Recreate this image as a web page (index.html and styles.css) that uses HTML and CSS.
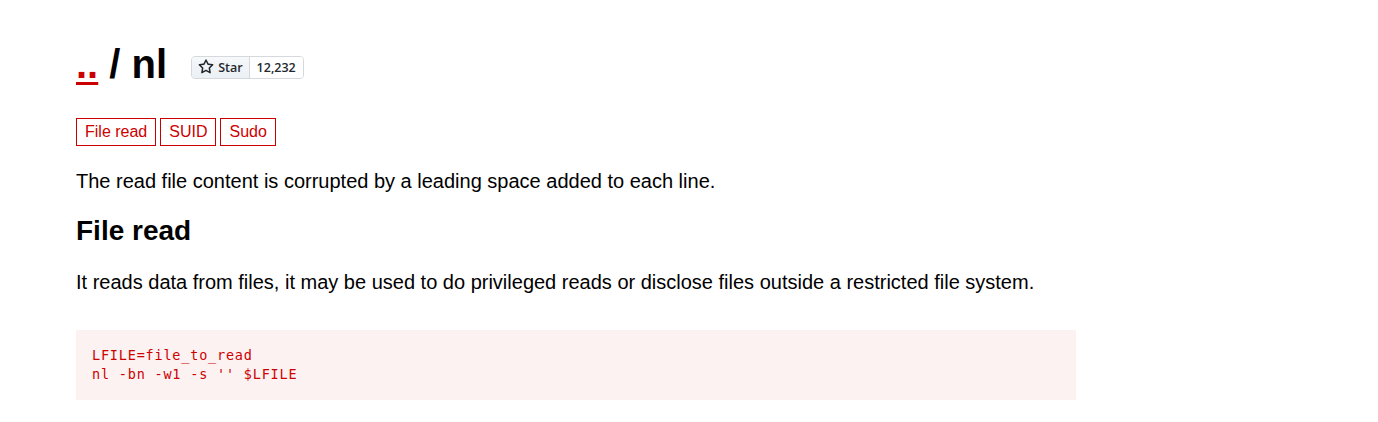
FILE: index.html
```html
<!DOCTYPE html>
<html>
<head>
<meta charset="utf-8">
<link rel="stylesheet" href="styles.css">
</head>
<body>
<main class="page">
  <div class="title-row">
    <h1 class="title"><a class="up" href="#">..</a> / nl</h1>
    <span class="gh-btn">
      <span class="gh-star">
        <svg class="gh-icon" viewBox="0 0 16 16" width="16" height="16"><path d="M8 .25a.75.75 0 0 1 .673.418l1.882 3.815 4.21.612a.75.75 0 0 1 .416 1.279l-3.046 2.97.719 4.192a.751.751 0 0 1-1.088.791L8 12.347l-3.766 1.980a.75.75 0 0 1-1.088-.79l.72-4.194L.818 6.374a.75.75 0 0 1 .416-1.28l4.21-.611L7.327.668A.75.75 0 0 1 8 .25Zm0 2.445L6.615 5.5a.75.75 0 0 1-.564.41l-3.097.45 2.240 2.184a.75.75 0 0 1 .216.664l-.528 3.084 2.769-1.456a.75.75 0 0 1 .698 0l2.770 1.456-.530-3.084a.75.75 0 0 1 .216-.664l2.240-2.183-3.096-.45a.75.75 0 0 1-.564-.41L8 2.694Z"/></svg>
        Star
      </span>
      <span class="gh-count">12,232</span>
    </span>
  </div>
  <ul class="tags">
    <li><a class="tag" href="#">File read</a></li>
    <li><a class="tag" href="#">SUID</a></li>
    <li><a class="tag" href="#">Sudo</a></li>
  </ul>
  <p class="text">The read file content is corrupted by a leading space added to each line.</p>
  <h2 class="section">File read</h2>
  <p class="text">It reads data from files, it may be used to do privileged reads or disclose files outside a restricted file system.</p>
  <pre class="code"><code>LFILE=file_to_read
nl -bn -w1 -s '' $LFILE</code></pre>
</main>
</body>
</html>
```

FILE: styles.css
```css
html, body {
  margin: 0;
  padding: 0;
  background: #fff;
}
body {
  font-family: "Liberation Sans", Arial, sans-serif;
  color: #000;
}
.page {
  width: 1000px;
  padding: 26px 0 0 76px;
}
.title-row {
  display: flex;
  align-items: center;
  gap: 24px;
  height: 70px;
}
.title {
  margin: 0;
  font-size: 40px;
  font-weight: bold;
  line-height: 1;
  padding-top: 6px;
}
.up {
  color: #c00;
  text-decoration: underline;
  text-decoration-thickness: 3px;
  text-underline-offset: 4px;
}
.gh-btn {
  display: inline-flex;
  height: 21px;
  border: 1px solid #d5d8dc;
  border-radius: 4px;
  font-family: "Open Sans", "Liberation Sans", sans-serif;
  font-size: 12.5px;
  font-weight: 600;
  color: #24292f;
  overflow: hidden;
  margin-top: 12px;
}
.gh-star {
  display: flex;
  align-items: center;
  gap: 4px;
  padding: 0 6px;
  background: linear-gradient(#f6f8fa, #ebf0f4);
  border-right: 1px solid #d5d8dc;
}
.gh-icon {
  width: 16px;
  height: 16px;
  fill: #24292f;
}
.gh-count {
  display: flex;
  align-items: center;
  padding: 0 7px 0 7px;
  background: #fff;
}
.tags {
  list-style: none;
  margin: 22px 0 0;
  padding: 0;
  display: flex;
  gap: 4px;
}
.tag {
  display: block;
  border: 1px solid #c00;
  color: #c00;
  text-decoration: none;
  font-size: 16px;
  line-height: 26px;
  padding: 0 8px;
}
.text {
  font-size: 20px;
  line-height: 28px;
  margin: 21px 0 0;
}
.section {
  font-size: 28px;
  font-weight: bold;
  line-height: 32px;
  margin: 20px 0 0;
}
.section + .text {
  margin-top: 21px;
}
.code {
  margin: 34px 0 0;
  background: #fdf2f2;
  color: #c00;
  font-family: "DejaVu Sans Mono", monospace;
  font-size: 13.5px;
  letter-spacing: 0.8px;
  line-height: 19px;
  padding: 16px;
}
```
